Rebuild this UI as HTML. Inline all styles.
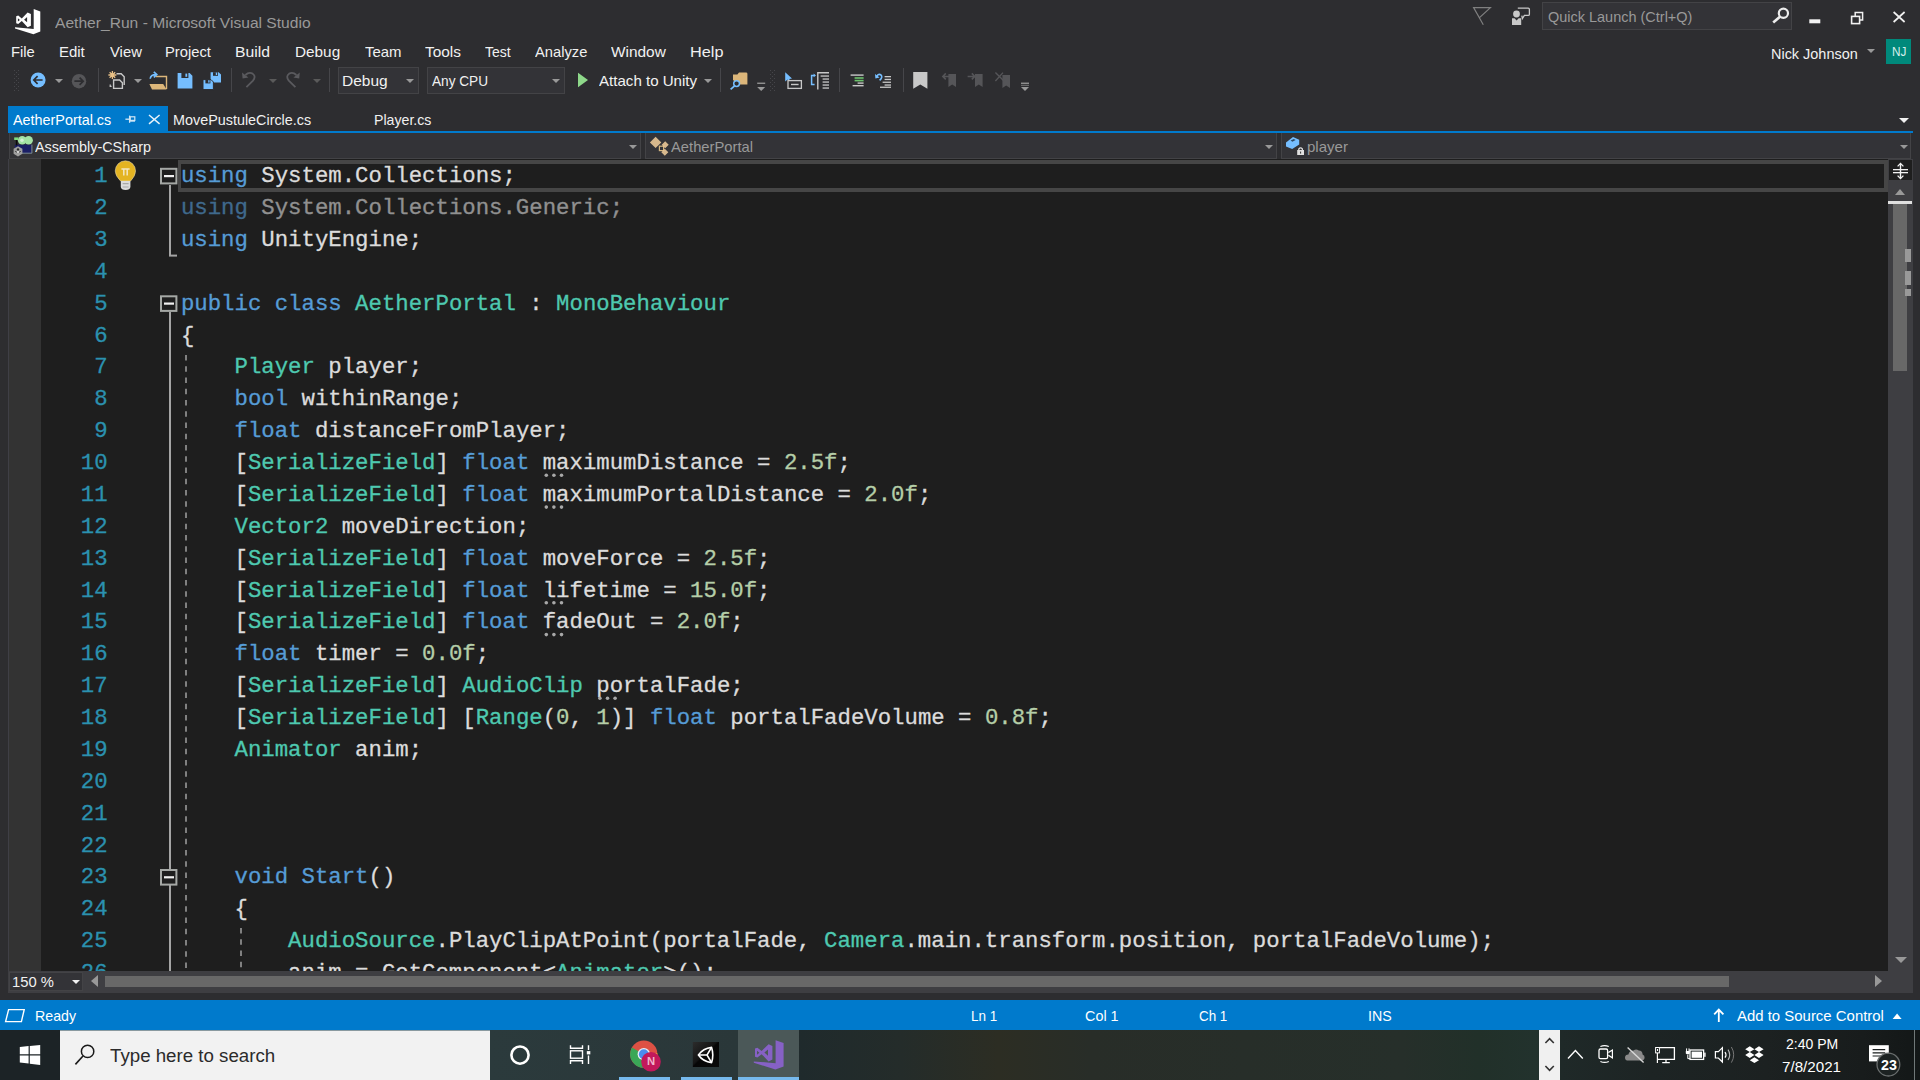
<!DOCTYPE html>
<html lang="en"><head><meta charset="utf-8"><title>Aether_Run - Microsoft Visual Studio</title>
<style>
html,body{margin:0;padding:0;background:#2d2d30;}
body{width:1920px;height:1080px;overflow:hidden;position:relative;font-family:"Liberation Sans",sans-serif;}
.t{position:absolute;white-space:pre;transform-origin:0 0;}
.b{position:absolute;}
svg{position:absolute;overflow:visible;}
.code{position:absolute;left:180.9px;-webkit-text-stroke:0.3px;white-space:pre;font-family:"Liberation Mono",monospace;font-size:22.33px;line-height:32px;height:32px;color:#dcdcdc;}
.ln{position:absolute;left:41px;width:66.6px;text-align:right;white-space:pre;font-family:"Liberation Mono",monospace;font-size:22.33px;line-height:32px;height:32px;color:#2b91af;-webkit-text-stroke:0.3px;}
.k{color:#569cd6}.c{color:#4ec9b0}.n{color:#b5cea8}
.sep{position:absolute;width:1px;background:#46464a;top:68px;height:24px;}
.dd{position:absolute;width:0;height:0;border-left:4px solid transparent;border-right:4px solid transparent;border-top:4px solid #999;}
</style></head>
<body>
<!-- title bar -->
<svg width="1920" height="1080" viewBox="0 0 1920 1080" style="left:0;top:0;pointer-events:none" ><path fill="#ffffff" fill-rule="evenodd" d="M33.7,9 L40.3,11.4 L40.3,31.6 L33.4,34.3 L15,28.6 L15,27.2 L33.7,28.9 Z M16.2,16.3 L18.2,15.6 L21.8,18.4 L27.6,12.5 L30.9,14 L30.9,25.7 L27.6,27.2 L21.8,21 L18.2,24 L16.2,23.3 Z M17.9,18.2 L17.9,21.6 L19.9,19.9 Z M24.1,19.7 L27.1,17 L27.1,22.3 Z"/></svg>
<span class="t" style="left:55.30px;top:14.88px;font-size:15.5px;line-height:15.5px;color:#999999;transform:scaleX(1.0069);">Aether_Run - Microsoft Visual Studio</span>
<svg width="1920" height="1080" viewBox="0 0 1920 1080" style="left:0;top:0;pointer-events:none" ><path d="M1483.3,24.8 L1473.6,7.6 L1490.4,7.6 L1479.8,17.4" fill="none" stroke="#808080" stroke-width="1.2"/></svg>
<svg width="1920" height="1080" viewBox="0 0 1920 1080" style="left:0;top:0;pointer-events:none" ><circle cx="1516.5" cy="14" r="3.4" fill="#c8c8c8"/><path d="M1512,18.2 L1514.5,18.2 L1516.6,20.6 L1518.7,18.2 L1521.2,18.2 L1521.2,25 L1512,25 Z" fill="#c8c8c8"/><path d="M1517.8,8.2 L1528.2,8.2 Q1529.4,8.2 1529.4,9.4 L1529.4,14.2 Q1529.4,15.4 1528.2,15.4 L1524.4,15.4 L1522.4,18.6 L1521.8,15.6" fill="none" stroke="#c8c8c8" stroke-width="1.3"/></svg>
<div class="b" style="left:1542px;top:2px;width:250px;height:28px;background:#333337;box-sizing:border-box;border:1px solid #434346;"></div>
<span class="t" style="left:1548.30px;top:9.00px;font-size:15px;line-height:15px;color:#999999;transform:scaleX(0.9650);">Quick Launch (Ctrl+Q)</span>
<svg width="1920" height="1080" viewBox="0 0 1920 1080" style="left:0;top:0;pointer-events:none" ><circle cx="1783.4" cy="13.3" r="4.6" fill="none" stroke="#ededed" stroke-width="2.2"/><path d="M1780.2,16.6 L1773.2,22.6" stroke="#ededed" stroke-width="2.6" fill="none"/></svg>
<svg width="1920" height="1080" viewBox="0 0 1920 1080" style="left:0;top:0;pointer-events:none" ><rect x="1809.3" y="19.3" width="11" height="4" fill="#f1f1f1"/><path d="M1855.2,16 L1855.2,12.6 L1862.6,12.6 L1862.6,20 L1859.6,20" fill="none" stroke="#f1f1f1" stroke-width="1.5"/><rect x="1851.6" y="16.4" width="8" height="7.2" fill="none" stroke="#f1f1f1" stroke-width="1.6"/><path d="M1893.6,12 L1904.6,22 M1904.6,12 L1893.6,22" stroke="#f1f1f1" stroke-width="1.7" fill="none"/></svg>
<!-- menu -->
<span class="t" style="left:11.21px;top:43.90px;font-size:15px;line-height:15px;color:#f1f1f1;transform:scaleX(0.9856);">File</span>
<span class="t" style="left:59.40px;top:43.90px;font-size:15px;line-height:15px;color:#f1f1f1;transform:scaleX(0.9969);">Edit</span>
<span class="t" style="left:110.00px;top:43.90px;font-size:15px;line-height:15px;color:#f1f1f1;transform:scaleX(0.9874);">View</span>
<span class="t" style="left:165.32px;top:43.90px;font-size:15px;line-height:15px;color:#f1f1f1;transform:scaleX(0.9824);">Project</span>
<span class="t" style="left:234.95px;top:43.90px;font-size:15px;line-height:15px;color:#f1f1f1;transform:scaleX(1.0496);">Build</span>
<span class="t" style="left:294.68px;top:43.90px;font-size:15px;line-height:15px;color:#f1f1f1;transform:scaleX(1.0219);">Debug</span>
<span class="t" style="left:365.00px;top:43.90px;font-size:15px;line-height:15px;color:#f1f1f1;transform:scaleX(0.9949);">Team</span>
<span class="t" style="left:425.00px;top:43.90px;font-size:15px;line-height:15px;color:#f1f1f1;transform:scaleX(1.0285);">Tools</span>
<span class="t" style="left:485.00px;top:43.90px;font-size:15px;line-height:15px;color:#f1f1f1;transform:scaleX(0.9350);">Test</span>
<span class="t" style="left:535.00px;top:43.90px;font-size:15px;line-height:15px;color:#f1f1f1;transform:scaleX(0.9807);">Analyze</span>
<span class="t" style="left:611.00px;top:43.90px;font-size:15px;line-height:15px;color:#f1f1f1;transform:scaleX(1.0277);">Window</span>
<span class="t" style="left:689.92px;top:43.90px;font-size:15px;line-height:15px;color:#f1f1f1;transform:scaleX(1.0845);">Help</span>
<span class="t" style="left:1771.34px;top:45.90px;font-size:15px;line-height:15px;color:#f1f1f1;transform:scaleX(0.9628);">Nick Johnson</span>
<div class="dd" style="left:1867px;top:49px;border-top-color:#999;border-left-width:4px;border-right-width:4px;border-top-width:4px"></div>
<div class="b" style="left:1886px;top:39px;width:25px;height:25px;background:#00897b;"></div>
<span class="t" style="left:1891.54px;top:45.59px;font-size:12.3px;line-height:12.3px;color:#d8f0ec;transform:scaleX(0.9582);">NJ</span>
<!-- toolbar -->
<svg width="1920" height="1080" viewBox="0 0 1920 1080" style="left:0;top:0;pointer-events:none" ><rect x="14" y="70" width="1" height="1" fill="#46464a"/><rect x="18" y="70" width="1" height="1" fill="#46464a"/><rect x="16" y="72" width="1" height="1" fill="#46464a"/><rect x="14" y="74" width="1" height="1" fill="#46464a"/><rect x="18" y="74" width="1" height="1" fill="#46464a"/><rect x="16" y="76" width="1" height="1" fill="#46464a"/><rect x="14" y="78" width="1" height="1" fill="#46464a"/><rect x="18" y="78" width="1" height="1" fill="#46464a"/><rect x="16" y="80" width="1" height="1" fill="#46464a"/><rect x="14" y="82" width="1" height="1" fill="#46464a"/><rect x="18" y="82" width="1" height="1" fill="#46464a"/><rect x="16" y="84" width="1" height="1" fill="#46464a"/><rect x="14" y="86" width="1" height="1" fill="#46464a"/><rect x="18" y="86" width="1" height="1" fill="#46464a"/><rect x="16" y="88" width="1" height="1" fill="#46464a"/><rect x="14" y="90" width="1" height="1" fill="#46464a"/><rect x="18" y="90" width="1" height="1" fill="#46464a"/><circle cx="38.1" cy="80" r="7.5" fill="#75beff"/><path d="M42.6,80 L34,80 M37.6,76.2 L33.8,80 L37.6,83.8" stroke="#2d2d30" stroke-width="1.7" fill="none"/><circle cx="79" cy="81.2" r="7.2" fill="#555558"/><path d="M74.4,81.2 L83,81.2 M79.6,77.6 L83.2,81.2 L79.6,84.8" stroke="#2d2d30" stroke-width="1.7" fill="none"/><path d="M116.5,73.8 L121.2,73.8 L124.2,76.8 L124.2,85" fill="none" stroke="#c8c8c8" stroke-width="1.4"/><path d="M113.6,80 L119.6,80 L122.4,82.8 L122.4,88.4 L113.6,88.4 Z" fill="none" stroke="#c8c8c8" stroke-width="1.4"/><path d="M110.2,84.6 L110.2,86.4 L111.6,86.4" fill="none" stroke="#c8c8c8" stroke-width="1.2"/><path d="M112.4,71 L112.4,79 M108.4,75 L116.4,75 M109.6,72.2 L115.2,77.8 M115.2,72.2 L109.6,77.8" stroke="#e8c087" stroke-width="1.3" fill="none"/><path d="M155.5,76.5 L166.5,76.5 L166.5,89" fill="none" stroke="#dcb67a" stroke-width="1.4"/><path d="M149.4,84 L163.2,84 L166.6,89.4 L152,89.4 Z" fill="#dcb67a"/><path d="M150.2,78.8 Q150.6,74.4 156.4,74.6 M153.8,71.8 L156.8,74.6 L153.8,77.4" fill="none" stroke="#75beff" stroke-width="1.6"/><path d="M177.6,73 L189.6,73 L192.4,75.8 L192.4,88.4 L177.6,88.4 Z" fill="#75beff"/><rect x="181.4" y="73" width="7" height="5" fill="#2d2d30"/><rect x="185.4" y="73.6" width="1.8" height="3.2" fill="#75beff"/><path d="M210.6,72.2 L218.6,72.2 L221,74.6 L221,82.6 L210.6,82.6 Z" fill="#75beff"/><rect x="213" y="72.2" width="5" height="3.6" fill="#2d2d30"/><rect x="215.8" y="72.6" width="1.4" height="2.4" fill="#75beff"/><path d="M203,79.6 L211,79.6 L213.4,82 L213.4,89.6 L203,89.6 Z" fill="#75beff" stroke="#2d2d30" stroke-width="1"/><rect x="205.4" y="79.8" width="5" height="3.6" fill="#2d2d30"/><rect x="208.2" y="80.2" width="1.4" height="2.4" fill="#75beff"/><path d="M246.4,87.2 L253,80.6 Q256.4,76.4 252.6,73.6 Q249,71.6 245.4,75" fill="none" stroke="#5a5a5e" stroke-width="1.8"/><path d="M242,72.4 L242.6,78.6 L248.4,77.6 Z" fill="#5a5a5e"/><path d="M295.4,87.2 L288.8,80.6 Q285.4,76.4 289.2,73.6 Q292.8,71.6 296.4,75" fill="none" stroke="#5a5a5e" stroke-width="1.8"/><path d="M299.8,72.4 L299.2,78.6 L293.4,77.6 Z" fill="#5a5a5e"/><path d="M578,72.8 L588,80 L578,87.2 Z" fill="#8ed88a"/><path d="M733,74.4 L737.4,74.4 L739,72.4 L746,72.4 Q747.4,72.4 747.4,73.8 L747.4,84.4 L738,84.4 L733,80 Z" fill="#dcb67a"/><circle cx="736.6" cy="83.6" r="2.9" fill="#2d2d30" stroke="#75beff" stroke-width="1.5"/><path d="M734.6,85.8 L730.6,89.4" stroke="#75beff" stroke-width="1.8"/><rect x="757.2" y="82.6" width="8" height="1.3" fill="#999"/><path d="M757.2,87 L765.2,87 L761.2,91 Z" fill="#999"/><rect x="770" y="70" width="1" height="1" fill="#46464a"/><rect x="774" y="70" width="1" height="1" fill="#46464a"/><rect x="772" y="72" width="1" height="1" fill="#46464a"/><rect x="770" y="74" width="1" height="1" fill="#46464a"/><rect x="774" y="74" width="1" height="1" fill="#46464a"/><rect x="772" y="76" width="1" height="1" fill="#46464a"/><rect x="770" y="78" width="1" height="1" fill="#46464a"/><rect x="774" y="78" width="1" height="1" fill="#46464a"/><rect x="772" y="80" width="1" height="1" fill="#46464a"/><rect x="770" y="82" width="1" height="1" fill="#46464a"/><rect x="774" y="82" width="1" height="1" fill="#46464a"/><rect x="772" y="84" width="1" height="1" fill="#46464a"/><rect x="770" y="86" width="1" height="1" fill="#46464a"/><rect x="774" y="86" width="1" height="1" fill="#46464a"/><rect x="772" y="88" width="1" height="1" fill="#46464a"/><rect x="770" y="90" width="1" height="1" fill="#46464a"/><rect x="774" y="90" width="1" height="1" fill="#46464a"/><path d="M785.2,72.2 L785.2,81.6 L787.6,79.6 L789.2,82.6 L790.6,81.8 L789.2,79 L792,78.6 Z" fill="#75beff"/><rect x="788" y="80.6" width="13.4" height="7.8" fill="#2d2d30" stroke="#c8c8c8" stroke-width="1.3"/><rect x="791" y="83.8" width="7.6" height="1.4" fill="#c8c8c8"/><path d="M814.6,75.4 L811.6,75.4 L811.6,84.6 L814.6,84.6" fill="none" stroke="#75beff" stroke-width="1.5"/><path d="M813.6,73.6 L816,75.4 L813.6,77.2 Z" fill="#75beff"/><path d="M817.8,89.6 L817.8,72.8 L829,72.8" fill="none" stroke="#c8c8c8" stroke-width="1.4"/><rect x="820.6" y="75.4" width="8.399999999999977" height="1.3" fill="#c8c8c8"/><rect x="822.6" y="78.4" width="6.399999999999977" height="1.3" fill="#c8c8c8"/><rect x="822.6" y="81.4" width="6.399999999999977" height="1.3" fill="#c8c8c8"/><rect x="822.6" y="84.4" width="6.399999999999977" height="1.3" fill="#c8c8c8"/><rect x="822.6" y="87.4" width="6.399999999999977" height="1.3" fill="#c8c8c8"/><rect x="850.6" y="74.4" width="13" height="1.4" fill="#c8c8c8"/><rect x="854.6" y="77.2" width="9" height="1.6" fill="#6cc36c"/><rect x="854.6" y="79.8" width="9" height="1.6" fill="#6cc36c"/><rect x="857.6" y="82.4" width="6" height="1.4" fill="#c8c8c8"/><rect x="852.6" y="85" width="11" height="1.4" fill="#c8c8c8"/><path d="M876.6,76.6 Q878.6,73.2 881,75 Q883,77 879.6,80.4" fill="none" stroke="#75beff" stroke-width="1.6"/><path d="M875,74 L875.4,78.4 L879.6,77.6 Z" fill="#75beff"/><rect x="884.6" y="76" width="6.399999999999977" height="1.3" fill="#c8c8c8"/><rect x="884.6" y="78.8" width="6.399999999999977" height="1.3" fill="#c8c8c8"/><rect x="882.6" y="81.6" width="8.399999999999977" height="1.3" fill="#c8c8c8"/><rect x="884.6" y="84.4" width="6.399999999999977" height="1.3" fill="#c8c8c8"/><rect x="880" y="86.6" width="11" height="1.3" fill="#c8c8c8"/><path d="M913.2,72 L927.4,72 L927.4,88.8 L920.3,84.6 L913.2,88.8 Z" fill="#c8c8c8"/><path d="M948.4,74 L956,74 L956,87 L952.2,84.6 L948.4,87 Z" fill="#555558"/><path d="M950,76.4 L943,76.4 M945.8,73.4 L942.8,76.4 L945.8,79.4" stroke="#555558" stroke-width="1.5" fill="none"/><path d="M975,74 L982.6,74 L982.6,87 L978.8,84.6 L975,87 Z" fill="#555558"/><path d="M967.6,76.4 L974.6,76.4 M971.8,73.4 L974.8,76.4 L971.8,79.4" stroke="#555558" stroke-width="1.5" fill="none"/><path d="M1002.4,75 L1010,75 L1010,88 L1006.2,85.6 L1002.4,88 Z" fill="#555558"/><path d="M995.4,72.6 L1004,81 M1003,72.6 L995.4,81" stroke="#555558" stroke-width="1.4" fill="none"/><rect x="1021" y="82.6" width="8" height="1.3" fill="#999"/><rect x="1021" y="84.8" width="8" height="1" fill="#777"/><path d="M1021,87 L1029,87 L1025,91 Z" fill="#999"/></svg>
<div class="sep" style="left:98px"></div>
<div class="sep" style="left:231px"></div>
<div class="sep" style="left:329px"></div>
<div class="sep" style="left:720px"></div>
<div class="sep" style="left:839px"></div>
<div class="sep" style="left:903px"></div>
<div class="b" style="left:338px;top:67px;width:81px;height:27px;background:#333337;box-sizing:border-box;border:1px solid #434346;"></div>
<span class="t" style="left:342.17px;top:73.20px;font-size:15px;line-height:15px;color:#f1f1f1;transform:scaleX(1.0336);">Debug</span>
<div class="dd" style="left:405.5px;top:79px;border-top-color:#999;border-left-width:4px;border-right-width:4px;border-top-width:4px"></div>
<div class="b" style="left:427px;top:67px;width:138px;height:27px;background:#333337;box-sizing:border-box;border:1px solid #434346;"></div>
<span class="t" style="left:432.20px;top:73.20px;font-size:15px;line-height:15px;color:#f1f1f1;transform:scaleX(0.9088);">Any CPU</span>
<div class="dd" style="left:552px;top:79px;border-top-color:#999;border-left-width:4px;border-right-width:4px;border-top-width:4px"></div>
<span class="t" style="left:599.40px;top:73.20px;font-size:15px;line-height:15px;color:#f1f1f1;transform:scaleX(1.0057);">Attach to Unity</span>
<div class="dd" style="left:55px;top:79px;border-top-color:#999;border-left-width:4px;border-right-width:4px;border-top-width:4px"></div>
<div class="dd" style="left:134px;top:79px;border-top-color:#999;border-left-width:4px;border-right-width:4px;border-top-width:4px"></div>
<div class="dd" style="left:269px;top:79px;border-top-color:#5a5a5a;border-left-width:4px;border-right-width:4px;border-top-width:4px"></div>
<div class="dd" style="left:313px;top:79px;border-top-color:#5a5a5a;border-left-width:4px;border-right-width:4px;border-top-width:4px"></div>
<div class="dd" style="left:704px;top:79px;border-top-color:#999;border-left-width:4px;border-right-width:4px;border-top-width:4px"></div>
<!-- document tabs -->
<div class="b" style="left:8px;top:106px;width:160px;height:27px;background:#007acc;"></div>
<div class="b" style="left:8px;top:131px;width:1905px;height:2px;background:#007acc;"></div>
<span class="t" style="left:13.30px;top:112.10px;font-size:15px;line-height:15px;color:#ffffff;transform:scaleX(0.9574);">AetherPortal.cs</span>
<svg width="1920" height="1080" viewBox="0 0 1920 1080" style="left:0;top:0;pointer-events:none" ><path d="M125.4,119.2 L129.4,119.2" stroke="#d0e6f5" stroke-width="1.3"/><path d="M129.6,115.6 L129.6,122.8" stroke="#d0e6f5" stroke-width="1.3"/><rect x="130.2" y="116.8" width="4.6" height="3.6" fill="none" stroke="#d0e6f5" stroke-width="1.2"/><path d="M130,121 L135,121" stroke="#d0e6f5" stroke-width="1.4"/></svg>
<svg width="1920" height="1080" viewBox="0 0 1920 1080" style="left:0;top:0;pointer-events:none" ><path d="M149,115 L159.6,123.8 M159.6,115 L149,123.8" stroke="#e6f2fa" stroke-width="1.5" fill="none"/></svg>
<span class="t" style="left:173.34px;top:112.10px;font-size:15px;line-height:15px;color:#f1f1f1;transform:scaleX(0.9579);">MovePustuleCircle.cs</span>
<span class="t" style="left:374.06px;top:112.10px;font-size:15px;line-height:15px;color:#f1f1f1;transform:scaleX(0.9434);">Player.cs</span>
<div class="dd" style="left:1899px;top:118px;border-top-color:#f1f1f1;border-left-width:5px;border-right-width:5px;border-top-width:5px"></div>
<!-- navigation bar -->
<div class="b" style="left:8px;top:133px;width:1904px;height:26px;background:#2d2d30;"></div>
<div class="b" style="left:9px;top:133px;width:632px;height:25.5px;background:#333337;box-sizing:border-box;border:1px solid #434346;border-top:none;"></div>
<div class="b" style="left:645px;top:133px;width:631.5px;height:25.5px;background:#333337;box-sizing:border-box;border:1px solid #434346;border-top:none;"></div>
<div class="b" style="left:1281px;top:133px;width:630px;height:25.5px;background:#333337;box-sizing:border-box;border:1px solid #434346;border-top:none;"></div>
<svg width="1920" height="1080" viewBox="0 0 1920 1080" style="left:0;top:0;pointer-events:none" ><rect x="14.8" y="144.6" width="16.8" height="8.4" fill="#1b1f66"/><path d="M14.8,153.2 L31.9,153.2 L31.9,144.6" fill="none" stroke="#7a8a96" stroke-width="1"/><rect x="14.2" y="137.4" width="4" height="2.6" fill="#7fdc7f"/><rect x="15.8" y="140" width="1.6" height="5.4" fill="#0a0a0a"/><circle cx="22.2" cy="140.3" r="4.3" fill="#a4e2a4"/><circle cx="28.6" cy="140.3" r="4.3" fill="#a4e2a4"/><circle cx="22" cy="140.3" r="1.7" fill="#d4efd4"/><path d="M18,146.2 L22.4,148.7 L22.4,153.8 L18,156.4 L13.6,153.8 L13.6,148.7 Z" fill="#a0a0a0"/><circle cx="18" cy="149.4" r="1.2" fill="#2a2a2a"/><rect x="17.1" y="151.2" width="1.8" height="1.5" fill="#e8e8e8"/><path d="M15.2,151.4 L16.8,152.2 M20.8,151.4 L19.2,152.2" stroke="#3a3a3a" stroke-width="1"/><path d="M649.9,142.4 L655.6,136.70000000000002 L661.3000000000001,142.4 L655.6,148.1 Z " fill="#eecb9a" opacity=".88"/><rect x="659.4" y="146.2" width="4.2" height="4.4" fill="none" stroke="#e8c58a" stroke-width="1.2" opacity=".9"/><path d="M661.7,144.8 L665.2,141.3 L668.7,144.8 L665.2,148.3 Z M661.3,152.2 L664.8,148.7 L668.3,152.2 L664.8,155.7 Z " fill="#eecb9a" opacity=".88"/><path d="M1286,142.4 L1293,137 L1299.2,139.8 L1299.2,144.6 L1292.2,149 L1286,146.4 Z" fill="#75beff"/><path d="M1290.6,140.6 L1293.8,139 L1295.6,140 L1292.4,141.8 Z" fill="#2d4a66"/><rect x="1297.2" y="150" width="6.8" height="5" fill="#e0e0e0"/><path d="M1298.8,150 L1298.8,149 Q1300.6,146.8 1302.4,149 L1302.4,150" fill="none" stroke="#e0e0e0" stroke-width="1.2"/><rect x="1300.1" y="151.6" width="1" height="2" fill="#333"/></svg>
<span class="t" style="left:35.00px;top:138.90px;font-size:15px;line-height:15px;color:#f1f1f1;transform:scaleX(0.9599);">Assembly-CSharp</span>
<span class="t" style="left:671.00px;top:138.90px;font-size:15px;line-height:15px;color:#999999;transform:scaleX(0.9838);">AetherPortal</span>
<span class="t" style="left:1307.30px;top:138.90px;font-size:15px;line-height:15px;color:#999999;transform:scaleX(1.0034);">player</span>
<div class="dd" style="left:629px;top:145px;border-top-color:#999;border-left-width:4px;border-right-width:4px;border-top-width:4px"></div>
<div class="dd" style="left:1265px;top:145px;border-top-color:#999;border-left-width:4px;border-right-width:4px;border-top-width:4px"></div>
<div class="dd" style="left:1900px;top:145px;border-top-color:#999;border-left-width:4px;border-right-width:4px;border-top-width:4px"></div>
<!-- editor -->
<div class="b" style="left:8px;top:159px;width:1904px;height:812px;background:#1e1e1e;"></div>
<div class="b" style="left:8px;top:159px;width:1px;height:840px;background:#3f3f46;"></div>
<div class="b" style="left:9px;top:159px;width:32px;height:812px;background:#333333;"></div>
<div class="b" style="left:178px;top:160px;width:1710px;height:32px;background:transparent;box-sizing:border-box;border:3px solid #464646;border-top-width:4px;border-bottom-width:4px;border-right-width:4px;"></div>
<div class="ln" style="top:160.20px">1</div>
<div class="code" style="top:160.20px"><span class="k">using</span> System.Collections;</div>
<div class="ln" style="top:192.07px">2</div>
<div class="code" style="top:192.07px"><span style="opacity:.6"><span class="k">using</span> System.Collections.Generic;</span></div>
<div class="ln" style="top:223.95px">3</div>
<div class="code" style="top:223.95px"><span class="k">using</span> UnityEngine;</div>
<div class="ln" style="top:255.82px">4</div>
<div class="ln" style="top:287.70px">5</div>
<div class="code" style="top:287.70px"><span class="k">public</span> <span class="k">class</span> <span class="c">AetherPortal</span> : <span class="c">MonoBehaviour</span></div>
<div class="ln" style="top:319.57px">6</div>
<div class="code" style="top:319.57px">{</div>
<div class="ln" style="top:351.45px">7</div>
<div class="code" style="top:351.45px">    <span class="c">Player</span> player;</div>
<div class="ln" style="top:383.32px">8</div>
<div class="code" style="top:383.32px">    <span class="k">bool</span> withinRange;</div>
<div class="ln" style="top:415.20px">9</div>
<div class="code" style="top:415.20px">    <span class="k">float</span> distanceFromPlayer;</div>
<div class="ln" style="top:447.07px">10</div>
<div class="code" style="top:447.07px">    [<span class="c">SerializeField</span>] <span class="k">float</span> maximumDistance = <span class="n">2.5f</span>;</div>
<div class="ln" style="top:478.95px">11</div>
<div class="code" style="top:478.95px">    [<span class="c">SerializeField</span>] <span class="k">float</span> maximumPortalDistance = <span class="n">2.0f</span>;</div>
<div class="ln" style="top:510.82px">12</div>
<div class="code" style="top:510.82px">    <span class="c">Vector2</span> moveDirection;</div>
<div class="ln" style="top:542.70px">13</div>
<div class="code" style="top:542.70px">    [<span class="c">SerializeField</span>] <span class="k">float</span> moveForce = <span class="n">2.5f</span>;</div>
<div class="ln" style="top:574.58px">14</div>
<div class="code" style="top:574.58px">    [<span class="c">SerializeField</span>] <span class="k">float</span> lifetime = <span class="n">15.0f</span>;</div>
<div class="ln" style="top:606.45px">15</div>
<div class="code" style="top:606.45px">    [<span class="c">SerializeField</span>] <span class="k">float</span> fadeOut = <span class="n">2.0f</span>;</div>
<div class="ln" style="top:638.33px">16</div>
<div class="code" style="top:638.33px">    <span class="k">float</span> timer = <span class="n">0.0f</span>;</div>
<div class="ln" style="top:670.20px">17</div>
<div class="code" style="top:670.20px">    [<span class="c">SerializeField</span>] <span class="c">AudioClip</span> portalFade;</div>
<div class="ln" style="top:702.08px">18</div>
<div class="code" style="top:702.08px">    [<span class="c">SerializeField</span>] [<span class="c">Range</span>(<span class="n">0</span>, <span class="n">1</span>)] <span class="k">float</span> portalFadeVolume = <span class="n">0.8f</span>;</div>
<div class="ln" style="top:733.95px">19</div>
<div class="code" style="top:733.95px">    <span class="c">Animator</span> anim;</div>
<div class="ln" style="top:765.83px">20</div>
<div class="ln" style="top:797.70px">21</div>
<div class="ln" style="top:829.58px">22</div>
<div class="ln" style="top:861.45px">23</div>
<div class="code" style="top:861.45px">    <span class="k">void</span> <span class="k">Start</span>()</div>
<div class="ln" style="top:893.33px">24</div>
<div class="code" style="top:893.33px">    {</div>
<div class="ln" style="top:925.20px">25</div>
<div class="code" style="top:925.20px">        <span class="c">AudioSource</span>.PlayClipAtPoint(portalFade, <span class="c">Camera</span>.main.transform.position, portalFadeVolume);</div>
<div class="ln" style="top:957.08px">26</div>
<div class="code" style="top:957.08px">        anim = GetComponent&lt;<span class="c">Animator</span>&gt;();</div>
<svg width="1920" height="1080" viewBox="0 0 1920 1080" style="left:0;top:0;pointer-events:none" ><path d="M115.2,171 A10.2,10.2 0 1 1 135.6,171 Q135.4,176 130.6,181 L120.6,181 Q115.4,176 115.2,171 Z" fill="#e4b422" stroke="#e8e0c8" stroke-width="0.9" stroke-opacity=".55"/><path d="M121.4,169 L129.6,169 M123.8,169.6 L123.8,175.6 M127.2,169.6 L127.2,175.6" stroke="#f2e6c2" stroke-width="1.5" fill="none"/><path d="M120.8,181 L130.4,181 L130.4,187 Q130,190 125.6,190 Q121.2,190 120.8,187 Z" fill="#dcdcdc"/><path d="M122.6,183.6 L128.6,183.6 M122.6,187 L128.6,187" stroke="#a8a8a8" stroke-width="1.1"/><rect x="169" y="185" width="2" height="71" fill="#a5a5a5"/><rect x="169" y="254.6" width="8" height="2" fill="#a5a5a5"/><rect x="169" y="312" width="2" height="659" fill="#a5a5a5"/><rect x="161" y="168.8" width="15.4" height="14.6" fill="#1e1e1e" stroke="#a5a8a5" stroke-width="2"/><rect x="164" y="175.0" width="10" height="2.2" fill="#f1f1f1"/><rect x="161" y="296.3" width="15.4" height="14.6" fill="#1e1e1e" stroke="#a5a8a5" stroke-width="2"/><rect x="164" y="302.5" width="10" height="2.2" fill="#f1f1f1"/><rect x="161" y="870" width="15.4" height="14.6" fill="#1e1e1e" stroke="#a5a8a5" stroke-width="2"/><rect x="164" y="876.2" width="10" height="2.2" fill="#f1f1f1"/><path d="M186,355 L186,971" stroke="#808080" stroke-width="2" stroke-dasharray="5.6,5.65"/><path d="M241,928 L241,971" stroke="#808080" stroke-width="2" stroke-dasharray="5.6,5.65"/><circle cx="546.3" cy="475.2" r="1.8" fill="#a8a8a8"/><circle cx="553.9" cy="475.2" r="1.8" fill="#a8a8a8"/><circle cx="561.5" cy="475.2" r="1.8" fill="#a8a8a8"/><circle cx="546.3" cy="507.1" r="1.8" fill="#a8a8a8"/><circle cx="553.9" cy="507.1" r="1.8" fill="#a8a8a8"/><circle cx="561.5" cy="507.1" r="1.8" fill="#a8a8a8"/><circle cx="546.3" cy="602.7" r="1.8" fill="#a8a8a8"/><circle cx="553.9" cy="602.7" r="1.8" fill="#a8a8a8"/><circle cx="561.5" cy="602.7" r="1.8" fill="#a8a8a8"/><circle cx="546.3" cy="634.6" r="1.8" fill="#a8a8a8"/><circle cx="553.9" cy="634.6" r="1.8" fill="#a8a8a8"/><circle cx="561.5" cy="634.6" r="1.8" fill="#a8a8a8"/><circle cx="599.9" cy="698.3" r="1.8" fill="#a8a8a8"/><circle cx="607.5" cy="698.3" r="1.8" fill="#a8a8a8"/><circle cx="615.1" cy="698.3" r="1.8" fill="#a8a8a8"/></svg>
<!-- scrollbars -->
<div class="b" style="left:1888px;top:159px;width:25px;height:833px;background:#3e3e42;"></div>
<div class="b" style="left:1888.5px;top:160px;width:23.5px;height:20px;background:#1e1e1e;"></div>
<svg width="1920" height="1080" viewBox="0 0 1920 1080" style="left:0;top:0;pointer-events:none" ><rect x="1893" y="169" width="15" height="1.3" fill="#f1f1f1"/><rect x="1893" y="172" width="15" height="1.3" fill="#f1f1f1"/><path d="M1900.5,164 L1900.5,178" stroke="#f1f1f1" stroke-width="1.4"/><path d="M1897.6,166.4 L1900.5,163.4 L1903.4,166.4 M1897.6,175.6 L1900.5,178.6 L1903.4,175.6" stroke="#f1f1f1" stroke-width="1.3" fill="none"/></svg>
<div class="b" style="left:1888px;top:201px;width:24px;height:3px;background:#e0e0e0;"></div>
<div class="b" style="left:1893px;top:204px;width:14px;height:167px;background:#686868;"></div>
<div class="b" style="left:1905px;top:249px;width:6px;height:13px;background:#999999;"></div>
<div class="b" style="left:1905px;top:271px;width:6px;height:14px;background:#999999;"></div>
<div class="b" style="left:1905px;top:289px;width:6px;height:7px;background:#999999;"></div>
<div class="dd" style="left:1894.8px;top:189px;border-top:none;border-bottom:6px solid #999;border-left-width:5.6px;border-right-width:5.6px"></div>
<div class="dd" style="left:1895px;top:957px;border-top-color:#999;border-left-width:6px;border-right-width:6px;border-top-width:6px"></div>
<div class="b" style="left:8px;top:971px;width:1904px;height:28px;background:#2d2d30;"></div>
<div class="b" style="left:8px;top:971px;width:1904px;height:22px;background:#3e3e42;"></div>
<div class="b" style="left:9px;top:972px;width:74px;height:19px;background:#333337;box-sizing:border-box;border:1px solid #434346;"></div>
<span class="t" style="left:11.71px;top:974.30px;font-size:15px;line-height:15px;color:#f1f1f1;transform:scaleX(0.9856);">150 %</span>
<div class="dd" style="left:72px;top:979.5px;border-top-color:#f1f1f1;border-left-width:4px;border-right-width:4px;border-top-width:4px"></div>
<div class="b" style="left:91px;top:975px;width:0;height:0;border-top:6.5px solid transparent;border-bottom:6.5px solid transparent;border-right:7px solid #999"></div>
<div class="b" style="left:1875px;top:975px;width:0;height:0;border-top:6.5px solid transparent;border-bottom:6.5px solid transparent;border-left:7px solid #999"></div>
<div class="b" style="left:105px;top:976px;width:1624px;height:11px;background:#686868;"></div>
<div class="b" style="left:1888px;top:971px;width:25px;height:22px;background:#3e3e42;"></div>
<!-- status bar -->
<div class="b" style="left:0px;top:1000px;width:1920px;height:30px;background:#007acc;"></div>
<svg width="1920" height="1080" viewBox="0 0 1920 1080" style="left:0;top:0;pointer-events:none" ><path d="M8.6,1009.6 L24.2,1009.6 L21.4,1021.6 L5.6,1021.6 Z" fill="none" stroke="#ffffff" stroke-width="1.4"/><path d="M1718.8,1022 L1718.8,1010 M1714.2,1014.4 L1718.8,1009.6 L1723.4,1014.4" stroke="#ffffff" stroke-width="1.8" fill="none"/><path d="M1892.6,1019 L1901.6,1019 L1897.1,1013.6 Z" fill="#ffffff"/></svg>
<span class="t" style="left:34.85px;top:1008.30px;font-size:15px;line-height:15px;color:#ffffff;transform:scaleX(0.9473);">Ready</span>
<span class="t" style="left:970.80px;top:1008.30px;font-size:15px;line-height:15px;color:#ffffff;transform:scaleX(0.8976);">Ln 1</span>
<span class="t" style="left:1085.00px;top:1008.30px;font-size:15px;line-height:15px;color:#ffffff;transform:scaleX(0.9604);">Col 1</span>
<span class="t" style="left:1199.00px;top:1008.30px;font-size:15px;line-height:15px;color:#ffffff;transform:scaleX(0.8934);">Ch 1</span>
<span class="t" style="left:1368.35px;top:1008.30px;font-size:15px;line-height:15px;color:#ffffff;transform:scaleX(0.9458);">INS</span>
<span class="t" style="left:1736.70px;top:1008.30px;font-size:15px;line-height:15px;color:#ffffff;transform:scaleX(0.9956);">Add to Source Control</span>
<!-- taskbar -->
<svg width="1920" height="1080" viewBox="0 0 1920 1080" style="left:0;top:0;pointer-events:none" ><defs><linearGradient id="tbg" x1="0" x2="1" y1="0" y2="0"><stop offset="0" stop-color="#1c2224"/><stop offset="0.255" stop-color="#2b3a3c"/><stop offset="0.385" stop-color="#2a3739"/><stop offset="0.4167" stop-color="#1f2a2c"/><stop offset="0.469" stop-color="#242c2a"/><stop offset="0.52" stop-color="#2c2d23"/><stop offset="0.568" stop-color="#282d28"/><stop offset="0.73" stop-color="#262f2a"/><stop offset="0.77" stop-color="#213029"/><stop offset="0.8" stop-color="#22322d"/><stop offset="0.8135" stop-color="#1f2928"/><stop offset="0.86" stop-color="#1d2424"/><stop offset="0.92" stop-color="#1c2121"/><stop offset="0.97" stop-color="#181c1c"/><stop offset="1" stop-color="#131717"/></linearGradient></defs><rect x="0" y="1030" width="1920" height="50" fill="url(#tbg)"/><rect x="0" y="1030" width="60" height="50" fill="#1c2326"/><path d="M19.8,1047 L28.6,1046 L28.6,1054.2 L19.8,1054.2 Z M29.8,1045.9 L40.2,1044.9 L40.2,1054.2 L29.8,1054.2 Z M19.8,1055.4 L28.6,1055.4 L28.6,1063.6 L19.8,1062.6 Z M29.8,1055.4 L40.2,1055.4 L40.2,1064.9 L29.8,1063.7 Z" fill="#ffffff"/><rect x="60" y="1030" width="430" height="50" fill="#f2f2f2"/><rect x="60" y="1030" width="430" height="1" fill="#8a9aa0"/><circle cx="87.6" cy="1051.4" r="6.2" fill="none" stroke="#1a1a1a" stroke-width="1.5"/><path d="M83,1056 L75.4,1064.4" stroke="#1a1a1a" stroke-width="1.6"/><circle cx="520" cy="1055.1" r="8.6" fill="none" stroke="#ffffff" stroke-width="2.6"/><rect x="570.5" y="1050.8" width="12" height="7.4" fill="none" stroke="#ffffff" stroke-width="1.4"/><path d="M570.5,1045.2 L570.5,1048.2 L582.5,1048.2 L582.5,1045.2 M570.5,1064 L570.5,1060.8 L582.5,1060.8 L582.5,1064" stroke="#ffffff" stroke-width="1.4" fill="none"/><path d="M588.5,1045.2 L588.5,1050 M588.5,1055.4 L588.5,1064" stroke="#ffffff" stroke-width="1.4"/><rect x="586.8" y="1051.1" width="3.5" height="3.3" fill="#ffffff"/><rect x="738" y="1030" width="61" height="50" fill="#4b5858"/><rect x="619" y="1077" width="51" height="3" fill="#76b9ed"/><rect x="681" y="1077" width="51" height="3" fill="#76b9ed"/><rect x="738" y="1077" width="61" height="3" fill="#76b9ed"/><circle cx="643.8" cy="1054.2" r="13.6" fill="#dd5144"/><path d="M643.8,1054.2 L632.0,1047.4 A13.6,13.6 0 0 0 646.4,1067.55 Z" fill="#3aa757"/><path d="M643.8,1054.2 L657.4,1053.2 A13.6,13.6 0 0 1 646.4,1067.55 Z" fill="#f7c331"/><circle cx="643.8" cy="1054.2" r="6.2" fill="#e8eef5"/><circle cx="643.8" cy="1054.2" r="4.9" fill="#4a8cf0"/><circle cx="651" cy="1061.8" r="9.8" fill="#c2185b"/><defs><linearGradient id="ug" x1="0" y1="0" x2="1" y2="1"><stop offset="0" stop-color="#2c2c2c"/><stop offset=".45" stop-color="#141414"/><stop offset=".5" stop-color="#060606"/><stop offset="1" stop-color="#0a0a0a"/></linearGradient></defs><rect x="692.8" y="1042" width="26.2" height="25" fill="url(#ug)"/><path d="M698.4,1055 Q703,1048.4 711.6,1047.4 Q714,1055 711.6,1062.6 Q703,1061.6 698.4,1055 Z" fill="none" stroke="#ffffff" stroke-width="1.6" stroke-linejoin="round"/><path d="M707,1055 L699,1055 M707,1055 L711.2,1048 M707,1055 L711.2,1062" fill="none" stroke="#ffffff" stroke-width="1.5"/><path fill="#8661c5" fill-rule="evenodd" d="M775.6,1040.2 L783.6,1043 L783.6,1066.4 L775.4,1069.4 L753.8,1062.8 L753.8,1061.4 L775.6,1063.2 Z M755,1048.6 L757.4,1047.8 L761.6,1051 L768.6,1044.2 L772.4,1046 L772.4,1059.6 L768.6,1061.4 L761.6,1054.2 L757.4,1057.6 L755,1056.8 Z M757,1050.8 L757,1054.8 L759.4,1052.8 Z M764.4,1052.6 L768,1049.4 L768,1055.8 Z"/><rect x="1539" y="1030" width="21" height="50" fill="#f0f0f0"/><path d="M1545.4,1043 L1549.6,1038.6 L1553.8,1043 M1545.4,1066 L1549.6,1070.4 L1553.8,1066" stroke="#333" stroke-width="1.6" fill="none"/><path d="M1568,1058.4 L1575.4,1050.6 L1582.8,1058.4" stroke="#ffffff" stroke-width="1.4" fill="none"/><rect x="1599" y="1049" width="8.6" height="9.6" rx="1.4" fill="none" stroke="#ffffff" stroke-width="1.3"/><path d="M1608.4,1052.6 L1612.4,1050 L1612.4,1057.8 L1608.4,1055.2" fill="none" stroke="#ffffff" stroke-width="1.2"/><path d="M1600.4,1046.6 Q1604.6,1044.6 1608.8,1046.6 M1600.4,1061.4 Q1604.6,1063.4 1608.8,1061.4" fill="none" stroke="#ffffff" stroke-width="1.1"/><path d="M1628.6,1060.6 Q1625,1060.6 1625,1057.4 Q1625.2,1054.6 1628.4,1054.4 Q1629.4,1050.4 1633.6,1050.6 Q1636,1048.6 1638.8,1050.6 Q1642.4,1050.6 1642.6,1054.4 Q1644.8,1055.2 1644.6,1057.8 Q1644.2,1060.6 1641.4,1060.6 Z" fill="#8a8a8a"/><path d="M1627.6,1047.6 L1643.6,1062.6" stroke="#d8d8d8" stroke-width="1.4"/><path d="M1659.8,1047.6 L1674.4,1047.6 L1674.4,1059.4 L1657.6,1059.4" fill="none" stroke="#ffffff" stroke-width="1.3"/><path d="M1666,1059.4 L1666,1062.4 M1662.2,1062.7 L1669.8,1062.7" stroke="#ffffff" stroke-width="1.3"/><rect x="1655.6" y="1047.5" width="3.8" height="5.4" fill="none" stroke="#ffffff" stroke-width="1"/><path d="M1657.5,1049 L1657.5,1051" stroke="#ffffff" stroke-width="1"/><path d="M1657.4,1052.9 L1657.4,1063" stroke="#ffffff" stroke-width="1.2"/><rect x="1690" y="1050" width="13.6" height="9.4" fill="none" stroke="#ffffff" stroke-width="1.3"/><rect x="1691.6" y="1051.6" width="10.4" height="6.2" fill="#ffffff"/><rect x="1704.2" y="1052.6" width="1.4" height="4.2" fill="#ffffff"/><path d="M1686.6,1048.4 L1686.6,1051 M1689,1048.4 L1689,1051" stroke="#ffffff" stroke-width="1"/><path d="M1685.8,1051 L1689.8,1051 L1689.8,1053.4 Q1687.8,1055.4 1685.8,1053.4 Z" fill="#ffffff"/><path d="M1687.8,1055 L1687.8,1058.6 L1690,1058.6" fill="none" stroke="#ffffff" stroke-width="1"/><path d="M1715.4,1051.6 L1718.4,1051.6 L1722.4,1047.6 L1722.4,1062 L1718.4,1058 L1715.4,1058 Z" fill="none" stroke="#ffffff" stroke-width="1.2"/><path d="M1725,1052 Q1727,1054.8 1725,1057.6" fill="none" stroke="#ffffff" stroke-width="1.2"/><path d="M1728,1049.6 Q1731.4,1054.8 1728,1060" fill="none" stroke="#b8b8b8" stroke-width="1.1"/><path d="M1731.4,1047 Q1736,1054.8 1731.4,1062.6" fill="none" stroke="#777" stroke-width="1"/><path d="M1745.2,1049.2 L1749.8,1046.3 L1754.3999999999999,1049.2 L1749.8,1052.1000000000001 Z M1754.4,1049.2 L1759,1046.3 L1763.6,1049.2 L1759,1052.1000000000001 Z M1745.2,1055 L1749.8,1052.1 L1754.3999999999999,1055 L1749.8,1057.9 Z M1754.4,1055 L1759,1052.1 L1763.6,1055 L1759,1057.9 Z M1749.8000000000002,1060.2 L1754.4,1057.3 L1759.0,1060.2 L1754.4,1063.1000000000001 Z " fill="#ffffff"/><path d="M1869,1045.2 L1888.8,1045.2 L1888.8,1061.4 L1869,1061.4 Z" fill="#ffffff"/><path d="M1872.6,1049.6 L1885.2,1049.6 M1872.6,1052.8 L1885.2,1052.8 M1872.6,1056 L1885.2,1056" stroke="#1a1e1e" stroke-width="1.2"/><circle cx="1888.4" cy="1064.6" r="11.4" fill="#1c2222" stroke="#6a6e6e" stroke-width="1.3"/><rect x="1914" y="1030" width="1" height="50" fill="#707878"/></svg>
<span class="t" style="left:110.00px;top:1046.51px;font-size:18.3px;line-height:18.3px;color:#2b2b2b;transform:scaleX(1.0224);">Type here to search</span>
<span class="t" style="left:647.20px;top:1056.60px;font-size:10.4px;line-height:10.4px;color:#f0b4cc;transform:scaleX(1.0857);font-weight:bold;">N</span>
<span class="t" style="left:1880.60px;top:1057.73px;font-size:14.5px;line-height:14.5px;color:#ffffff;transform:scaleX(0.9836);font-weight:bold;">23</span>
<span class="t" style="left:1786.00px;top:1036.30px;font-size:15px;line-height:15px;color:#ffffff;transform:scaleX(0.9338);">2:40 PM</span>
<span class="t" style="left:1782.30px;top:1059.30px;font-size:15px;line-height:15px;color:#ffffff;transform:scaleX(1.0113);">7/8/2021</span>
</body></html>
